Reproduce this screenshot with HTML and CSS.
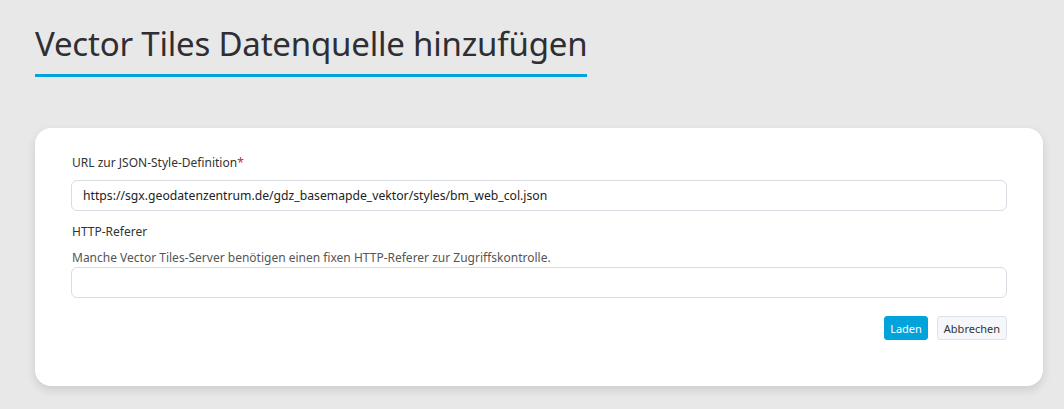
FILE: index.html
```html
<!DOCTYPE html>
<html lang="de">
<head>
<meta charset="utf-8">
<title>Vector Tiles Datenquelle hinzufügen</title>
<link rel="stylesheet" href="styles.css">
</head>
<body>
<main class="page">
  <header class="page-header">
    <h1 class="page-title">Vector Tiles Datenquelle hinzufügen</h1>
  </header>
  <section class="card">
    <div class="field">
      <label class="label" for="url">URL zur JSON-Style-Definition<span class="req">*</span></label>
      <input class="input" id="url" type="text" value="https://sgx.geodatenzentrum.de/gdz_basemapde_vektor/styles/bm_web_col.json">
    </div>
    <div class="field">
      <label class="label" for="ref">HTTP-Referer</label>
      <p class="help">Manche Vector Tiles-Server benötigen einen fixen HTTP-Referer zur Zugriffskontrolle.</p>
      <input class="input" id="ref" type="text" value="">
    </div>
    <div class="actions">
      <button class="btn btn-primary" type="button">Laden</button>
      <button class="btn btn-secondary" type="button">Abbrechen</button>
    </div>
  </section>
</main>
</body>
</html>
```
FILE: styles.css
```css
* { box-sizing: border-box; }
html, body { margin: 0; padding: 0; }
body {
  background: #e8e8e8;
  font-family: "Noto Sans", "Open Sans", sans-serif;
  color: #333;
  width: 1064px;
  height: 409px;
  overflow: hidden;
}
.page {
  padding: 21px 21px 0 35px;
}
.page-header {
  display: inline-block;
  border-bottom: 3px solid #00a3dc;
  padding-bottom: 8px;
}
.page-title {
  margin: 0;
  font-weight: 400;
  font-size: 33px;
  line-height: 45px;
  color: #2e2e33;
  letter-spacing: -0.2px;
}
.card {
  margin-top: 51px;
  background: #fff;
  border-radius: 16px;
  box-shadow: 0 4px 10px rgba(0,0,0,0.12);
  padding: 26px 36px 44px 36px;
  height: 258px;
}
.field { display: flex; flex-direction: column; }
.field + .field { margin-top: 12px; }
.label {
  font-size: 12px;
  line-height: 18px;
  color: #333;
  margin-bottom: 8px;
  padding-left: 1px;
}
.req { color: #c5282f; }
.help {
  margin: 0;
  font-size: 12px;
  line-height: 18px;
  color: #555;
  padding-left: 1px;
}
.input {
  height: 31px;
  border: 1px solid #d9dde3;
  border-radius: 6px;
  padding: 0 11px;
  font-family: inherit;
  font-size: 12.2px;
  color: #222;
  background: #fff;
  width: 100%;
}
.actions {
  display: flex;
  justify-content: flex-end;
  gap: 9px;
  margin-top: 18px;
}
.btn {
  font-family: inherit;
  font-size: 11px;
  height: 24px;
  padding: 0 6px;
  border-radius: 3px;
  cursor: pointer;
}
.btn-primary {
  background: #00a3db;
  color: #fff;
  border: 1px solid #00a3db;
  padding: 0 5px;
}
.btn-secondary {
  background: #f5f7fa;
  color: #333;
  border: 1px solid #dde2e8;
}
```
